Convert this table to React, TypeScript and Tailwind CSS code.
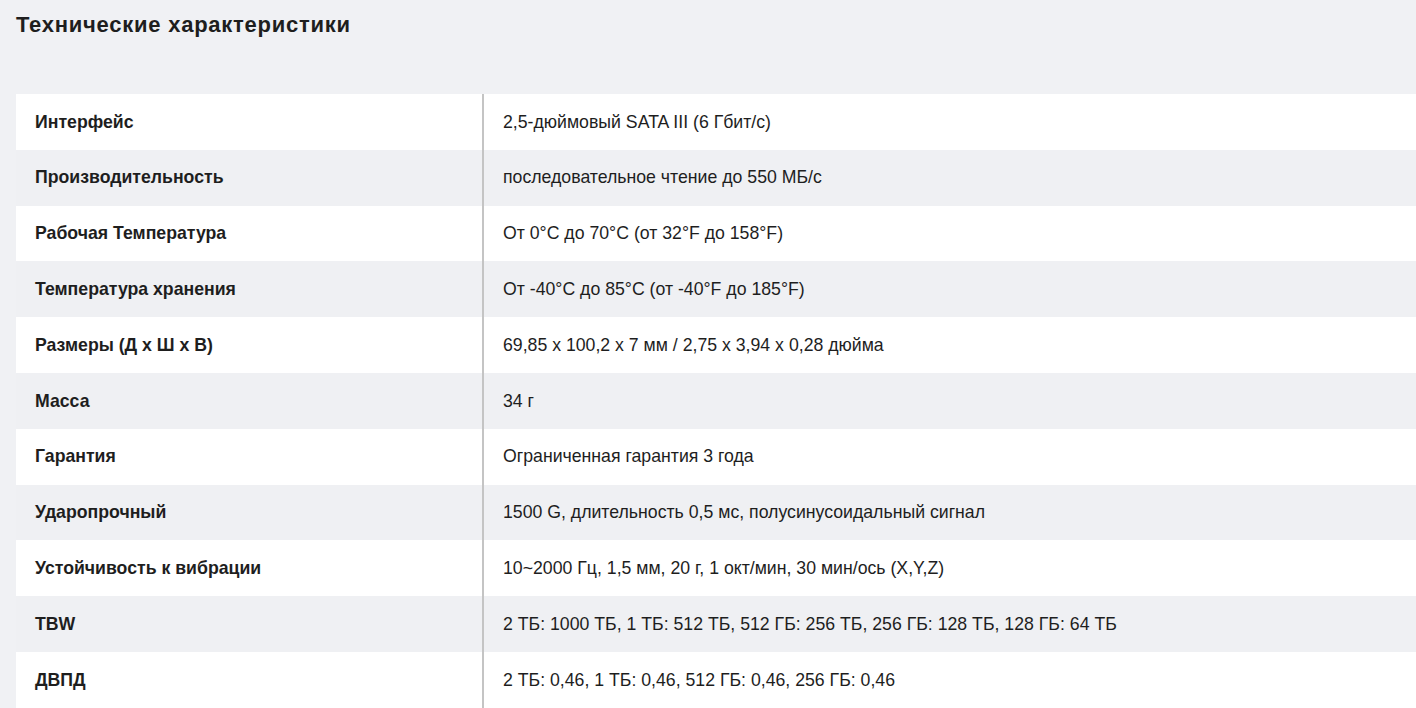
import React from "react";

/* spec rows: label + value */
const specs: [string, string][] = [
  ["Интерфейс", "2,5-дюймовый SATA III (6 Гбит/с)"],
  ["Производительность", "последовательное чтение до 550 МБ/с"],
  ["Рабочая Температура", "От 0°C до 70°C (от 32°F до 158°F)"],
  ["Температура хранения", "От -40°C до 85°C (от -40°F до 185°F)"],
  ["Размеры (Д x Ш x В)", "69,85 x 100,2 x 7 мм / 2,75 x 3,94 x 0,28 дюйма"],
  ["Масса", "34 г"],
  ["Гарантия", "Ограниченная гарантия 3 года"],
  ["Ударопрочный", "1500 G, длительность 0,5 мс, полусинусоидальный сигнал"],
  ["Устойчивость к вибрации", "10~2000 Гц, 1,5 мм, 20 г, 1 окт/мин, 30 мин/ось (X,Y,Z)"],
  ["TBW", "2 ТБ: 1000 ТБ, 1 ТБ: 512 ТБ, 512 ГБ: 256 ТБ, 256 ГБ: 128 ТБ, 128 ГБ: 64 ТБ"],
  ["ДВПД", "2 ТБ: 0,46, 1 ТБ: 0,46, 512 ГБ: 0,46, 256 ГБ: 0,46"],
];

const App: React.FC = () => {
  return (
    <div
      className="min-h-screen bg-[#f0f1f4] text-[#1e1e1e] pl-4 pt-[11px]"
      style={{ fontFamily: '"Liberation Sans", Arial, sans-serif' }}
    >
      <h2 className="text-[22px] font-bold leading-[28px] tracking-[0.75px]">Технические характеристики</h2>

      {/* table */}
      <div className="mt-[55px]">
        {specs.map(([label, value], i) => (
          <div
            key={label}
            className={`flex h-[55.8px] items-center text-[17.7px] ${i % 2 === 0 ? "bg-white" : "bg-[#eff0f3]"}`}
          >
            <div className="w-[466px] shrink-0 pl-[19px] font-bold">{label}</div>
            <div className="h-full w-[2px] bg-[#c4c4c4]" />
            <div className="pl-[19px]">{value}</div>
          </div>
        ))}
      </div>
    </div>
  );
};

export default App;
